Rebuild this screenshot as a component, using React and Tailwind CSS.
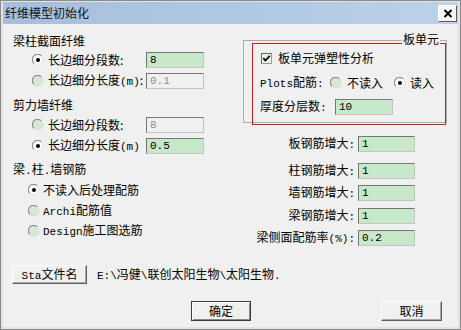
import React from "react";

const L = ({ children }) => (
  <span className="font-['Liberation_Mono'] text-[11px]">{children}</span>
);

const Radio = ({ checked }) => (
  <svg width="12" height="12" viewBox="0 0 12 12" className="shrink-0">
    <circle cx="6" cy="6" r="5.5" fill={checked ? "#ffffff" : "#d5e9d5"} />
    <path d="M1.9 9.3 A5 5 0 0 1 9.3 1.9" fill="none" stroke="#8c8c8c" strokeWidth="1.1" />
    <path d="M9.3 1.9 A5 5 0 0 1 1.9 9.3" fill="none" stroke="#dcdcdc" strokeWidth="1" />
    {checked && <circle cx="6" cy="6" r="2" fill="#000" />}
  </svg>
);

const Check = () => (
  <svg width="11" height="11" viewBox="0 0 11 11" className="shrink-0">
    <rect x="0.5" y="0.5" width="10" height="10" fill="#e6f2e6" stroke="#9a9a9a" />
    <path d="M0.5 10.5 V0.5 H10.5" fill="none" stroke="#6a6a6a" />
    <path d="M2.3 5.2 L4.4 7.5 L8.8 2.8" fill="none" stroke="#000" strokeWidth="1.8" />
  </svg>
);

const Field = ({ value, disabled, w = "w-[58px]" }) => (
  <div
    className={`${w} h-[16px] shrink-0 border-t border-l border-t-[#767676] border-l-[#767676] border-r border-b border-r-[#c4c4c4] border-b-[#c4c4c4] pl-[3px] flex items-center leading-[14px] font-['Liberation_Mono'] text-[11px] ${
      disabled ? "bg-[#f0f0f0] text-[#8e8e8e]" : "bg-[#c7e8c9] text-black"
    }`}
  >
    {value}
  </div>
);

export default function App() {
  return (
    <div className="w-[461px] h-[330px] border border-[#8a8a8a] bg-[#e2e2e2] pt-[1px] pl-[2px] pr-[2px] pb-[2px] flex flex-col font-['Noto_Sans_CJK_SC'] text-[12px] leading-[14px] text-black overflow-hidden">
      {/* title bar */}
      <div className="h-[22px] shrink-0 bg-gradient-to-r from-[#a6bedb] to-[#bcd2ea] flex items-center justify-between pl-[2px] pr-[1px]">
        <span className="text-[12px] leading-[14px] text-[#111]">纤维模型初始化</span>
        <div className="w-[19px] h-[17px] bg-[#f6f6f6] border border-t-white border-l-white border-r-[#5a5a5a] border-b-[#5a5a5a] flex items-center justify-center">
          <svg width="10" height="9" viewBox="0 0 10 9">
            <path d="M1.5 1 L8.5 8 M8.5 1 L1.5 8" stroke="#000" strokeWidth="2" />
          </svg>
        </div>
      </div>

      {/* body */}
      <div className="flex-1 bg-[#f0f0f0] flex flex-col">
        <div className="flex">
          {/* left column */}
          <div className="w-[240px] pl-[10px] flex flex-col">
            <div className="mt-[10px] h-[14px]">梁柱截面纤维</div>
            <div className="mt-[4px] h-[16px] flex items-center">
              <div className="ml-[19px]"><Radio checked /></div>
              <span className="ml-[4px] w-[98px]">长边细分段数:</span>
              <Field value="8" />
            </div>
            <div className="mt-[5px] h-[16px] flex items-center">
              <div className="ml-[19px]"><Radio /></div>
              <span className="ml-[4px] w-[98px]">长边细分长度<L>(m)</L>:</span>
              <Field value="0.1" disabled />
            </div>
            <div className="mt-[9px] h-[14px]">剪力墙纤维</div>
            <div className="mt-[5px] h-[16px] flex items-center">
              <div className="ml-[19px]"><Radio /></div>
              <span className="ml-[4px] w-[98px]">长边细分段数:</span>
              <Field value="8" disabled />
            </div>
            <div className="mt-[5px] h-[16px] flex items-center">
              <div className="ml-[19px]"><Radio checked /></div>
              <span className="ml-[4px] w-[98px]">长边细分长度<L>(m)</L></span>
              <Field value="0.5" />
            </div>
            <div className="mt-[8px] h-[14px]">梁<L>.</L>柱<L>.</L>墙钢筋</div>
            <div className="mt-[7px] h-[14px] flex items-center">
              <div className="ml-[15px]"><Radio checked /></div>
              <span className="ml-[3px]">不读入后处理配筋</span>
            </div>
            <div className="mt-[7px] h-[14px] flex items-center">
              <div className="ml-[15px]"><Radio /></div>
              <span className="ml-[3px]"><L>Archi</L>配筋值</span>
            </div>
            <div className="mt-[6px] h-[14px] flex items-center">
              <div className="ml-[15px]"><Radio /></div>
              <span className="ml-[3px]"><L>Design</L>施工图选筋</span>
            </div>
          </div>

          {/* right column */}
          <div className="w-[204px] flex flex-col">
            <div className="mt-[16px] h-[83px] w-[204px] border border-[#ababab] relative">
              <span className="absolute right-[6px] top-[-9px] px-[1px] bg-[#f0f0f0]">板单元</span>
              <div className="ml-[8px] mt-[2px] w-[194px] h-[82px] border border-[#cc2020] flex flex-col">
                <div className="mt-[6px] h-[16px] flex items-center">
                  <div className="ml-[8px]"><Check /></div>
                  <span className="ml-[6px]">板单元弹塑性分析</span>
                </div>
                <div className="mt-[9px] h-[16px] flex items-center">
                  <span className="ml-[7px] w-[70px]"><L>Plots</L>配筋<L>:</L></span>
                  <Radio />
                  <span className="ml-[5px]">不读入</span>
                  <div className="ml-[11px]"><Radio checked /></div>
                  <span className="ml-[4px]">读入</span>
                </div>
                <div className="mt-[8px] h-[16px] flex items-center">
                  <span className="ml-[7px] w-[75px]">厚度分层数<L>:</L></span>
                  <Field value="10" />
                </div>
              </div>
            </div>
            <div className="mt-[13px] h-[16px] flex items-center">
              <span className="w-[112px] text-right">板钢筋增大<L>:</L></span>
              <div className="ml-[3px]"><Field value="1" w="w-[57px]" /></div>
            </div>
            <div className="mt-[11px] h-[16px] flex items-center">
              <span className="w-[112px] text-right">柱钢筋增大<L>:</L></span>
              <div className="ml-[3px]"><Field value="1" w="w-[57px]" /></div>
            </div>
            <div className="mt-[6px] h-[16px] flex items-center">
              <span className="w-[112px] text-right">墙钢筋增大<L>:</L></span>
              <div className="ml-[3px]"><Field value="1" w="w-[57px]" /></div>
            </div>
            <div className="mt-[7px] h-[16px] flex items-center">
              <span className="w-[112px] text-right">梁钢筋增大<L>:</L></span>
              <div className="ml-[3px]"><Field value="1" w="w-[57px]" /></div>
            </div>
            <div className="mt-[6px] h-[16px] flex items-center">
              <span className="w-[112px] text-right whitespace-nowrap">梁侧面配筋率<L>(%):</L></span>
              <div className="ml-[3px]"><Field value="0.2" w="w-[57px]" /></div>
            </div>
          </div>
        </div>

        {/* file row */}
        <div className="mt-[19px] flex items-center">
          <div className="ml-[9px] w-[75px] h-[19px] bg-[#f0f0f0] border border-t-[#fdfdfd] border-l-[#fdfdfd] border-r-[#5e5e5e] border-b-[#5e5e5e] shadow-[inset_-1px_-1px_0_#a8a8a8] flex items-center justify-center">
            <span><L>Sta</L>文件名</span>
          </div>
          <span className="ml-[10px] whitespace-nowrap">
            <L>E:\</L>冯健<L>\</L>联创太阳生物<L>\</L>太阳生物<L>.</L>
          </span>
        </div>

        {/* buttons */}
        <div className="mt-[17px] flex items-center">
          <div className="ml-[188px] w-[60px] h-[20px] bg-[#f0f0f0] border border-[#3c3c3c] shadow-[inset_1px_1px_0_#ffffff,inset_-1px_-1px_0_#8a8a8a] flex items-center justify-center">
            确定
          </div>
          <div className="ml-[130px] w-[61px] h-[20px] bg-[#f0f0f0] border border-t-[#fdfdfd] border-l-[#fdfdfd] border-r-[#5e5e5e] border-b-[#5e5e5e] shadow-[inset_-1px_-1px_0_#a8a8a8] flex items-center justify-center">
            取消
          </div>
        </div>
      </div>
    </div>
  );
}
